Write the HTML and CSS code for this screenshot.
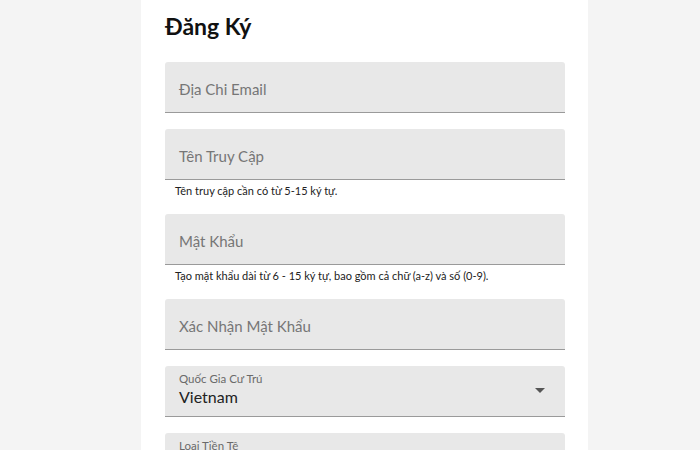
FILE: index.html
```html
<!DOCTYPE html>
<html>
	<head>
		<meta charset="UTF-8">
		<title>Đăng Ký</title>
		<link rel="stylesheet" href="styles.css">
	</head>
	<body>
		<div class="wrap">
			<h1 class="title">Đăng Ký</h1>
			<div class="group">
				<div class="field"><span class="placeholder">Địa Chi Email</span></div>
			</div>
			<div class="group">
				<div class="field"><span class="placeholder">Tên Truy Cập</span></div>
				<div class="hint">Tên truy cập cần có từ 5-15 ký tự.</div>
			</div>
			<div class="group">
				<div class="field"><span class="placeholder">Mật Khẩu</span></div>
				<div class="hint">Tạo mật khẩu dài từ 6 - 15 ký tự, bao gồm cả chữ (a-z) và số (0-9).</div>
			</div>
			<div class="group">
				<div class="field"><span class="placeholder">Xác Nhận Mật Khẩu</span></div>
			</div>
			<div class="group">
				<div class="field select">
					<div class="value">
						<span class="label">Quốc Gia Cư Trú</span>
						<span class="text">Vietnam</span>
					</div>
					<span class="arrow"></span>
				</div>
			</div>
			<div class="group">
				<div class="field select">
					<div class="value">
						<span class="label">Loại Tiền Tệ</span>
						<span class="text">VND</span>
					</div>
					<span class="arrow"></span>
				</div>
			</div>
		</div>
	</body>
</html>
```

FILE: styles.css
```css
html, body {
	margin: 0;
	padding: 0;
	height: 100%;
}
body {
	background-color: #f4f4f4;
	font-family: Lato, "Liberation Sans", sans-serif;
	overflow: hidden;
}
.wrap {
	box-sizing: border-box;
	width: 447px;
	min-height: 100%;
	margin-left: 141px;
	padding: 13px 23px 0 24px;
	background-color: #fff;
	display: flex;
	flex-direction: column;
}
.title {
	margin: 0 0 23px;
	font-size: 23px;
	line-height: 26px;
	font-weight: bold;
	color: #111;
}
.group {
	margin-bottom: 16px;
}
.field {
	box-sizing: border-box;
	height: 51px;
	padding: 3px 14px 0;
	background-color: #e8e8e8;
	border-bottom: 1px solid #9a9a9a;
	border-radius: 3px 3px 0 0;
	display: flex;
	align-items: center;
}
.placeholder {
	font-size: 15px;
	color: #767676;
}
.hint {
	padding: 3px 0 0 10px;
	margin-bottom: -1px;
	font-size: 11px;
	line-height: 16px;
	color: #222;
}
.select {
	justify-content: space-between;
	padding: 0 20px 0 14px;
}
.value {
	display: flex;
	flex-direction: column;
	margin-top: -3px;
}
.label {
	font-size: 11.5px;
	line-height: 15px;
	color: #6a6a6a;
}
.text {
	font-size: 16px;
	line-height: 22px;
	color: #222;
}
.arrow {
	width: 0;
	height: 0;
	border-left: 5px solid transparent;
	border-right: 5px solid transparent;
	border-top: 5px solid #555;
	margin-top: -2px;
}
```
